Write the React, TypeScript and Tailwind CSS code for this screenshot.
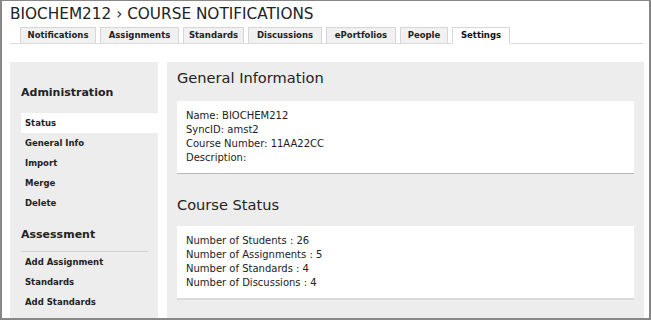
const tabs = [
  { label: 'Notifications', w: 'w-[76px]' },
  { label: 'Assignments', w: 'w-[79px]' },
  { label: 'Standards', w: 'w-[61px]' },
  { label: 'Discussions', w: 'w-[74px]' },
  { label: 'ePortfolios', w: 'w-[70px]' },
  { label: 'People', w: 'w-[48px]' },
  { label: 'Settings', w: 'w-[58px]', active: true },
];

const adminLinks = ['Status', 'General Info', 'Import', 'Merge', 'Delete'];
const assessmentLinks = ['Add Assignment', 'Standards', 'Add Standards'];

const info = ['Name: BIOCHEM212', 'SyncID: amst2', 'Course Number: 11AA22CC', 'Description:'];
const stats = [
  'Number of Students : 26',
  'Number of Assignments : 5',
  'Number of Standards : 4',
  'Number of Discussions : 4',
];

function SideLink({ label, active }: { label: string; active?: boolean }) {
  return (
    <div
      className={`ml-[11px] h-[20px] pl-[4px] text-[8.5px] font-bold leading-[20px] text-[#222] ${
        active ? 'bg-white' : ''
      }`}
    >
      {label}
    </div>
  );
}

export default function App() {
  return (
    <div
      className="flex h-[320px] w-[651px] flex-col overflow-hidden border-t border-r-2 border-b-2 border-l-2 border-[#878787] bg-white text-[#222]"
      style={{ fontFamily: '"DejaVu Sans", Verdana, sans-serif' }}
    >
      <div className="pl-[8px] pt-[4px] text-[15.3px] leading-[18px] text-[#222]">
        BIOCHEM212 › COURSE NOTIFICATIONS
      </div>

      <div className="mt-[4px] ml-[8px] mr-[6px] flex gap-[4px] border-b border-[#dcdcdc] pl-[10px]">
        {tabs.map((t) => (
          <div
            key={t.label}
            className={`${t.w} -mb-px flex h-[17px] items-center justify-center border border-[#d6d6d6] text-[8.5px] font-bold ${
              t.active ? 'border-b-white bg-white text-[#111]' : 'border-b-[#dcdcdc] bg-[#f1f1f1] text-[#222]'
            }`}
          >
            {t.label}
          </div>
        ))}
      </div>

      <div className="mt-[18px] flex min-h-0 flex-1 gap-[9px] pl-[8px]">
        <div className="w-[148px] bg-[#ededed] pt-[21px]">
          <div className="mb-[10px] h-[20px] pl-[11px] text-[11px] font-bold leading-[20px]">
            Administration
          </div>
          {adminLinks.map((l) => (
            <SideLink key={l} label={l} active={l === 'Status'} />
          ))}
          <div className="mt-[12px] ml-[11px] mr-[10px] border-b border-[#d2d2d2] pb-[6px] text-[11px] font-bold leading-[20px]">
            Assessment
          </div>
          {assessmentLinks.map((l) => (
            <SideLink key={l} label={l} />
          ))}
        </div>

        <div className="w-[477px] bg-[#ededed] px-[10px] pt-[8px]">
          <div className="mb-[15px] text-[14.6px] leading-[16px] text-[#222]">General Information</div>
          <div className="border-b border-[#b9b9b9] bg-white px-[9px] py-[8px] text-[10px] leading-[14px] text-[#222]">
            {info.map((l) => (
              <div key={l}>{l}</div>
            ))}
          </div>

          <div className="mt-[23px] mb-[13px] text-[14.6px] leading-[16px] text-[#222]">Course Status</div>
          <div className="border-b-2 border-[#dadada] bg-white px-[9px] py-[8px] text-[10px] leading-[14px] text-[#222]">
            {stats.map((l) => (
              <div key={l}>{l}</div>
            ))}
          </div>
        </div>
      </div>
    </div>
  );
}
